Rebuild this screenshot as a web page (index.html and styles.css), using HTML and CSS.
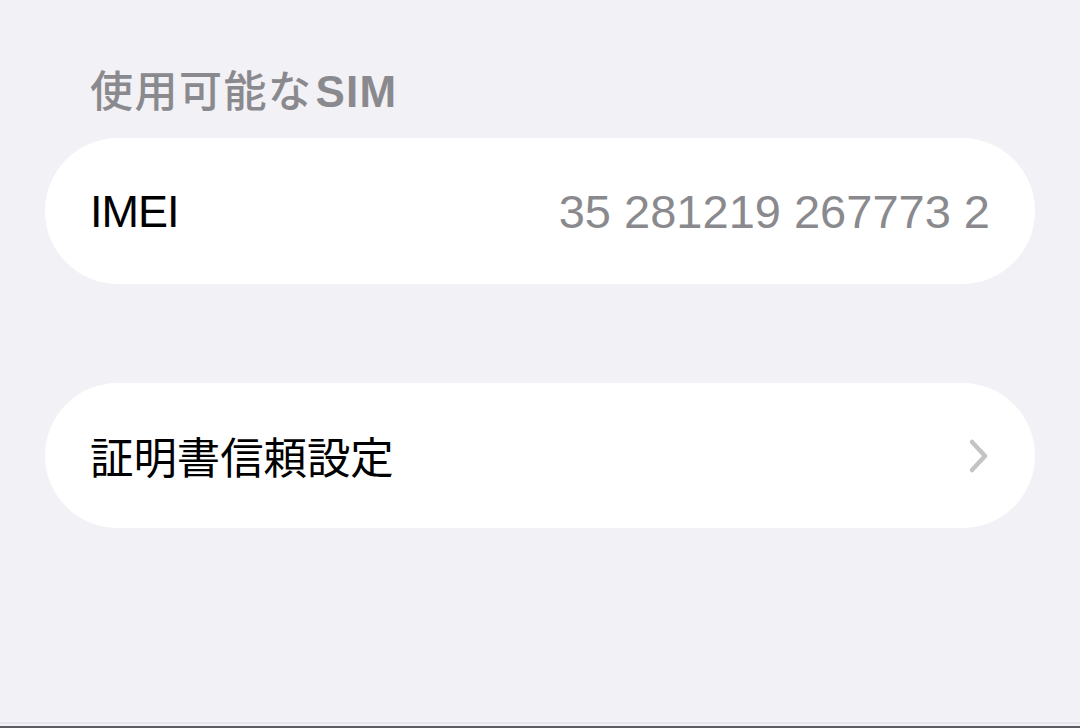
FILE: index.html
```html
<!DOCTYPE html>
<html lang="ja">
<head>
<meta charset="utf-8">
<link rel="stylesheet" href="styles.css">
</head>
<body>
<div class="screen">
  <div class="section-title"><span class="title-jp">使用可能な</span><span class="title-latin">SIM</span></div>
  <div class="card">
    <span class="label label-latin">IMEI</span>
    <span class="value">35 281219 267773 2</span>
  </div>
  <div class="card card-second">
    <span class="label">証明書信頼設定</span>
    <svg class="chevron" width="22" height="36" viewBox="0 0 22 36">
      <path d="M4 4 L17 18 L4 32" fill="none" stroke="#c4c4c7" stroke-width="4.5" stroke-linecap="round" stroke-linejoin="round"/>
    </svg>
  </div>
</div>
<div class="bottom-edge"></div>
</body>
</html>
```

FILE: styles.css
```css
html, body {
  margin: 0;
  padding: 0;
  height: 100%;
}
body {
  background: #f2f1f6;
  font-family: "Liberation Sans", "Noto Sans CJK JP", sans-serif;
  position: relative;
  overflow: hidden;
}
.screen {
  display: flex;
  flex-direction: column;
  padding: 60px 45px 0 45px;
}
.section-title {
  display: flex;
  align-items: baseline;
  height: 56px;
  color: #8a8a8e;
  padding-left: 45px;
  margin-bottom: 22px;
}
.title-jp {
  font-family: "Noto Sans CJK JP", sans-serif;
  font-weight: 500;
  font-size: 43px;
  line-height: 56px;
  letter-spacing: 1.5px;
}
.title-latin {
  font-family: "Liberation Sans", sans-serif;
  font-weight: 700;
  font-size: 44px;
  line-height: 56px;
  letter-spacing: 1.2px;
  margin-left: 3px;
}
.card {
  background: #ffffff;
  border-radius: 73px;
  height: 146px;
  display: flex;
  align-items: center;
  justify-content: space-between;
  padding: 0 45px;
  box-sizing: border-box;
}
.card-second {
  margin-top: 99px;
  height: 145px;
}
.label {
  font-family: "Noto Sans CJK JP", sans-serif;
  font-size: 43.4px;
  color: #000000;
  line-height: 1;
}
.label-latin {
  font-family: "Liberation Sans", sans-serif;
  font-size: 45px;
  letter-spacing: -1px;
}
.value {
  font-family: "Liberation Sans", sans-serif;
  font-size: 47px;
  color: #8a8a8e;
  line-height: 1;
}
.chevron {
  display: block;
}
.bottom-edge {
  position: absolute;
  left: 0;
  right: 0;
  bottom: 0;
  height: 2px;
  background: #5c5c62;
  box-shadow: 0 -4px 0 #e6e5ec;
}
```
